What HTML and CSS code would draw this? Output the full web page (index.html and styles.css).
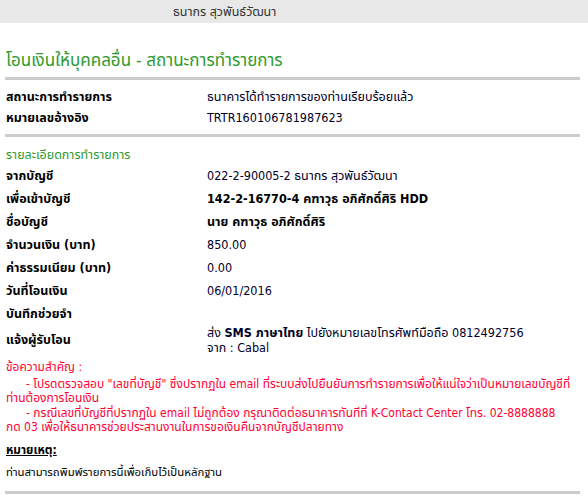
FILE: index.html
```html
<!DOCTYPE html>
<html>
<head>
<meta charset="utf-8">
<link rel="stylesheet" href="styles.css">
</head>
<body>
<div class="topbar"><span class="topname">ธนากร สุวพันธ์วัฒนา</span></div>
<div class="page">
  <h1 class="title">โอนเงินให้บุคคลอื่น - สถานะการทำรายการ</h1>
  <div class="rule rule-1"></div>
  <div class="rows rows-top">
    <div class="row"><div class="label">สถานะการทำรายการ</div><div class="value">ธนาคารได้ทำรายการของท่านเรียบร้อยแล้ว</div></div>
    <div class="row"><div class="label">หมายเลขอ้างอิง</div><div class="value">TRTR160106781987623</div></div>
  </div>
  <div class="rule"></div>
  <div class="section">รายละเอียดการทำรายการ</div>
  <div class="rows rows-detail">
    <div class="row"><div class="label">จากบัญชี</div><div class="value">022-2-90005-2 ธนากร สุวพันธ์วัฒนา</div></div>
    <div class="row"><div class="label">เพื่อเข้าบัญชี</div><div class="value strong">142-2-16770-4 คฑาวุธ อภิศักดิ์ศิริ HDD</div></div>
    <div class="row"><div class="label">ชื่อบัญชี</div><div class="value strong-name">นาย คฑาวุธ อภิศักดิ์ศิริ</div></div>
    <div class="row"><div class="label">จำนวนเงิน (บาท)</div><div class="value">850.00</div></div>
    <div class="row"><div class="label">ค่าธรรมเนียม (บาท)</div><div class="value">0.00</div></div>
    <div class="row"><div class="label">วันที่โอนเงิน</div><div class="value">06/01/2016</div></div>
    <div class="row"><div class="label">บันทึกช่วยจำ</div><div class="value"></div></div>
    <div class="row row-two"><div class="label">แจ้งผู้รับโอน</div><div class="value multi">ส่ง <b>SMS ภาษาไทย</b> ไปยังหมายเลขโทรศัพท์มือถือ 0812492756<br>จาก : Cabal</div></div>
  </div>
  <div class="notice">
    <div class="notice-head">ข้อความสำคัญ :</div>
    <div><span class="indent">- โปรดตรวจสอบ "เลขที่บัญชี" ซึ่งปรากฏใน email ที่ระบบส่งไปยืนยันการทำรายการเพื่อให้แน่ใจว่าเป็นหมายเลขบัญชีที่</span><br>ท่านต้องการโอนเงิน</div>
    <div><span class="indent">- กรณีเลขที่บัญชีที่ปรากฏใน email ไม่ถูกต้อง กรุณาติดต่อธนาคารทันทีที่ K-Contact Center โทร. 02-8888888</span><br>กด 03 เพื่อให้ธนาคารช่วยประสานงานในการขอเงินคืนจากบัญชีปลายทาง</div>
  </div>
  <div class="remark">หมายเหตุ:</div>
  <div class="print">ท่านสามารถพิมพ์รายการนี้เพื่อเก็บไว้เป็นหลักฐาน</div>
  <div class="rule rule-end"></div>
</div>
</body>
</html>
```
FILE: styles.css
```css
html, body {
  margin: 0;
  padding: 0;
  background: #ffffff;
}
body {
  font-family: "DejaVu Sans Condensed", "Noto Sans", "Noto Sans Thai", sans-serif;
  font-size: 12.5px;
  color: #000;
}
.topbar {
  height: 23px;
  background: #e8e8e8;
  display: flex;
  align-items: center;
  padding-left: 173px;
}
.topname {
  color: #333;
  line-height: 16px;
}
.page {
  width: 575px;
  padding: 0 0 0 5px;
}
.title {
  margin: 25px 0 0 1px;
  font-size: 17px;
  font-weight: normal;
  color: #2e9a2e;
  line-height: 24px;
}
.rule {
  height: 3px;
  background: #cccccc;
}
.rule-1 {
  margin-top: 5px;
}
.rows-top {
  padding-top: 6px;
  padding-bottom: 6px;
}
.rows-top .row {
  height: 21px;
}
.row {
  display: grid;
  grid-template-columns: 202px 1fr;
  align-items: center;
  line-height: 18px;
}
.label {
  padding-left: 1px;
  font-weight: bold;
  color: #000;
}
.value {
  color: #00002a;
}
.strong {
  font-weight: bold;
  color: #000;
}
.strong-name {
  font-weight: bold;
  color: #000;
}
.section {
  margin: 9px 0 0 1px;
  color: #2e9a2e;
  line-height: 18px;
}
.rows-detail .row {
  height: 23px;
}
.rows-detail .row-two {
  height: 24px;
}
.multi {
  line-height: 15px;
}
.notice {
  margin-top: 11px;
  padding-left: 1px;
  color: #ff0033;
  font-size: 12px;
  line-height: 14.5px;
}
.notice-head {
  margin-bottom: 2px;
}
.indent {
  padding-left: 20px;
}
.remark {
  margin-top: 6px;
  padding-left: 1px;
  font-weight: bold;
  text-decoration: underline;
  font-size: 11.8px;
  line-height: 18px;
}
.print {
  margin-top: 4px;
  padding-left: 1px;
  font-size: 11.4px;
  line-height: 18px;
}
.rule-end {
  margin-top: 10px;
}
```
